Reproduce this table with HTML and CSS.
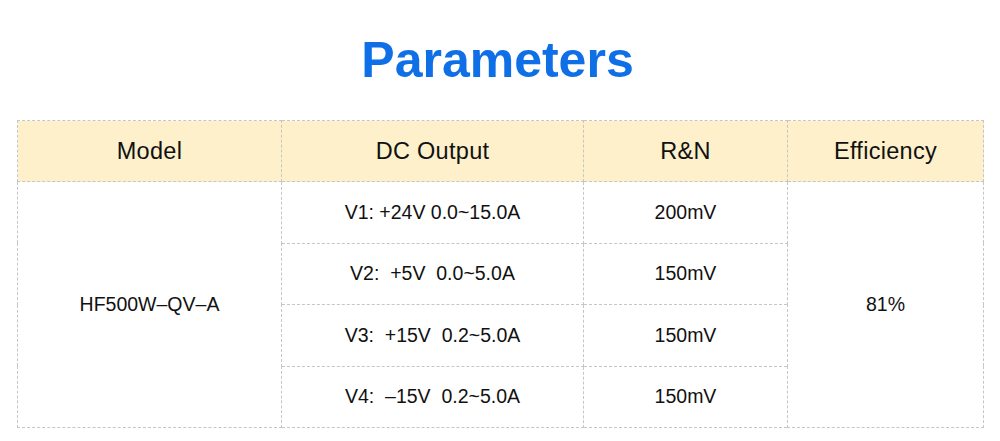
FILE: index.html
```html
<!DOCTYPE html>
<html>
<head>
<meta charset="utf-8">
<link rel="stylesheet" href="styles.css">
</head>
<body>
<div class="page">
  <h1 class="title">Parameters</h1>
  <table class="params">
    <colgroup>
      <col class="c1"><col class="c2"><col class="c3"><col class="c4">
    </colgroup>
    <thead>
      <tr><th>Model</th><th>DC Output</th><th>R&amp;N</th><th>Efficiency</th></tr>
    </thead>
    <tbody>
      <tr><td rowspan="4">HF500W&#8211;QV&#8211;A</td><td>V1: +24V 0.0~15.0A</td><td>200mV</td><td rowspan="4">81%</td></tr>
      <tr><td>V2:&nbsp; +5V&nbsp; 0.0~5.0A</td><td>150mV</td></tr>
      <tr><td>V3:&nbsp; +15V&nbsp; 0.2~5.0A</td><td>150mV</td></tr>
      <tr><td>V4:&nbsp; &#8211;15V&nbsp; 0.2~5.0A</td><td>150mV</td></tr>
    </tbody>
  </table>
</div>
</body>
</html>
```
FILE: styles.css
```css
html, body { margin: 0; padding: 0; background: #fff; }
.page { width: 1000px; padding-top: 29px; font-family: "Liberation Sans", Arial, sans-serif; color: #111; }
.title {
  margin: 0;
  padding-right: 5px;
  text-align: center;
  font-size: 50px;
  font-weight: bold;
  color: #0f6fe6;
  line-height: 63px;
}
.params {
  margin: 28px 0 0 17px;
  width: 966px;
  border-collapse: collapse;
  table-layout: fixed;
}
.c1 { width: 264px; } .c2 { width: 302px; } .c3 { width: 204px; } .c4 { width: 196px; }
.params th, .params td {
  border: 1px dashed #c6c6c6;
  text-align: center;
  padding: 0;
}
.params th {
  background: #fdf0cb;
  font-weight: normal;
  font-size: 23.5px;
  letter-spacing: 0.3px;
  height: 60px;
}
.params td {
  font-size: 19.5px;
  height: 60.5px;
}
```
